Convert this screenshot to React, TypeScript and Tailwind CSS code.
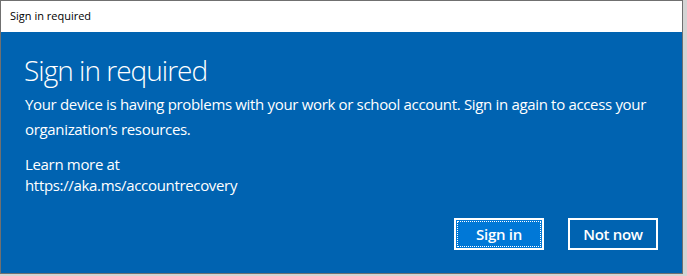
import React from "react";

function App() {
  return (
    <div className="w-[687px] h-[276px] bg-[#d4d4d4] font-['Open_Sans',sans-serif]">
      <div className="w-[683px] h-[274px] border border-[#707070] flex flex-col bg-[#0063b1]">
        <div className="h-[31px] bg-white flex items-center pl-[9px] text-[11px] text-black">
          Sign in required
        </div>
        <div className="flex-1 flex flex-col px-[23px] text-white">
          <h1 className="mt-[20px] text-[28px] font-light leading-[36px] tracking-[-0.035em]">Sign in required</h1>
          <p className="mt-[4px] text-[15px] leading-[25px] pl-[1px] tracking-[-0.022em]">
            Your device is having problems with your work or school account. Sign in again to access your
            organization’s resources.
          </p>
          <p className="mt-[12px] text-[15px] leading-[21px] pl-[1px] tracking-[-0.022em]">
            Learn more at
            <br />
            https://aka.ms/accountrecovery
          </p>
          <div className="mt-auto mb-[23px] flex justify-end gap-[24px] pr-[1px]">
            <button className="w-[90px] h-[32px] border-2 border-white bg-[#0078d7] p-[1px]">
              <span className="flex h-full w-full items-center justify-center border border-dotted border-white text-[15px] font-semibold tracking-[-0.02em]">
                Sign in
              </span>
            </button>
            <button className="w-[90px] h-[32px] border-2 border-white flex items-center justify-center text-[15px] font-semibold tracking-[-0.02em]">
              Not now
            </button>
          </div>
        </div>
      </div>
    </div>
  );
}

export default App;
